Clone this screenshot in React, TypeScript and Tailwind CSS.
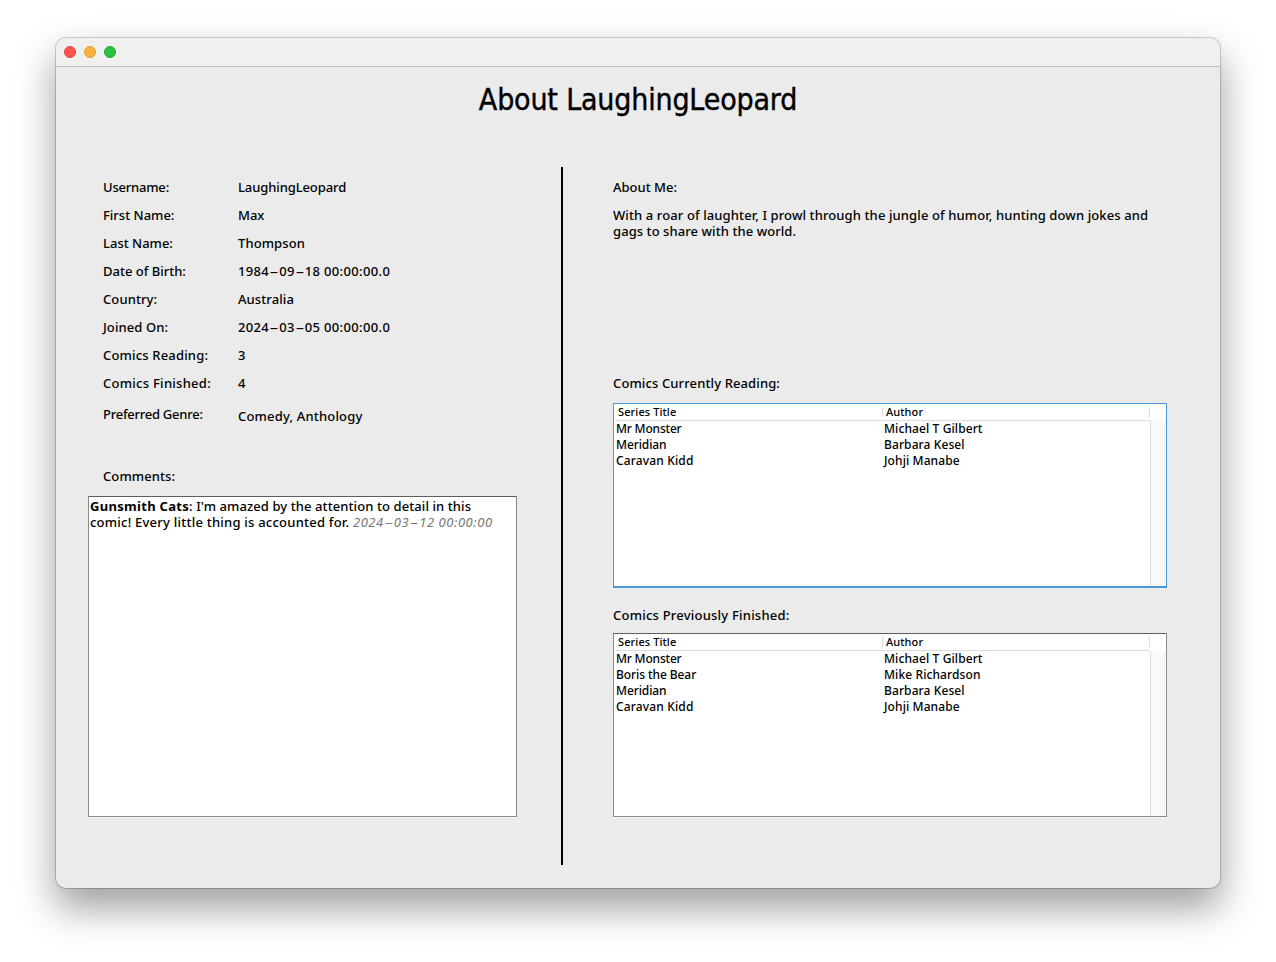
import React from "react";

const fields = [
  { label: "Username:", value: "LaughingLeopard", ls: "tracking-[-0.2px]", vs: "tracking-[-0.1px]" },
  { label: "First Name:", value: "Max", ls: "", vs: "" },
  { label: "Last Name:", value: "Thompson", ls: "", vs: "tracking-[0.1px]" },
  { label: "Date of Birth:", value: "1984-09-18 00:00:00.0", ls: "", vs: "tracking-[0.35px]" },
  { label: "Country:", value: "Australia", ls: "tracking-[0.1px]", vs: "tracking-[0.1px]" },
  { label: "Joined On:", value: "2024-03-05 00:00:00.0", ls: "tracking-[0.1px]", vs: "tracking-[0.35px]" },
  { label: "Comics Reading:", value: "3", ls: "tracking-[0.17px]", vs: "" },
  { label: "Comics Finished:", value: "4", ls: "tracking-[0.27px]", vs: "" },
];

type Row = { title: string; author: string; ts: string };

const reading: Row[] = [
  { title: "Mr Monster", author: "Michael T Gilbert", ts: "tracking-[-0.2px]" },
  { title: "Meridian", author: "Barbara Kesel", ts: "tracking-[-0.1px]" },
  { title: "Caravan Kidd", author: "Johji Manabe", ts: "tracking-[0.15px]" },
];

const finished: Row[] = [
  { title: "Mr Monster", author: "Michael T Gilbert", ts: "tracking-[-0.2px]" },
  { title: "Boris the Bear", author: "Mike Richardson", ts: "tracking-[-0.08px]" },
  { title: "Meridian", author: "Barbara Kesel", ts: "tracking-[-0.1px]" },
  { title: "Caravan Kidd", author: "Johji Manabe", ts: "tracking-[0.15px]" },
];

// Timestamps use wide hyphens between the date parts.
function Wide({ text }: { text: string }) {
  return (
    <>
      {text.split("-").map((part, i) => (
        <React.Fragment key={i}>
          {i > 0 && <span className="inline-block w-[10px] scale-x-[2.1] text-center tracking-normal">-</span>}
          {part}
        </React.Fragment>
      ))}
    </>
  );
}

function ComicTable({ rows, frame }: { rows: Row[]; frame: string }) {
  return (
    <div className={`flex w-[554px] shrink-0 flex-col bg-white ${frame}`}>
      <div className="flex h-[17px] shrink-0 text-[11px] leading-4 tracking-[0.1px]">
        <div className="ml-px flex w-[535px] border-b border-[#dcdcdc]">
          <div className="my-[3px] flex w-[268px] items-center border-r border-[#dcdcdc] pl-[3px]">Series Title</div>
          <div className="my-[3px] flex flex-1 items-center border-r border-[#dcdcdc] pl-[3px]">Author</div>
        </div>
      </div>
      <div className="flex min-h-0 flex-1">
        <div className="flex-1 text-[12px] leading-4">
          {rows.map((r) => (
            <div key={r.title} className="flex h-4">
              <div className={`w-[268px] pl-[2px] ${r.ts}`}>{r.title}</div>
              <div className="pl-[2px] tracking-[0.1px]">{r.author}</div>
            </div>
          ))}
        </div>
        <div className="mr-px w-[15px] border-x border-l-[#e0e0e0] border-r-[#ececec] bg-[#f9f9f9]" />
      </div>
    </div>
  );
}

export default function App() {
  return (
    <div className="h-[962px] w-[1276px] overflow-hidden bg-white pt-[38px] pl-[56px] font-['Noto_Sans',sans-serif] text-[13px] leading-4 font-medium text-black">
      <div className="flex h-[850px] w-[1164px] flex-col overflow-hidden rounded-[10px] bg-[#ebebeb] shadow-[0_0_0_1px_rgba(0,0,0,0.18),0_19px_38px_1px_rgba(0,0,0,0.38)]">
        <header className="flex h-[29px] shrink-0 items-center gap-2 border-b border-[#bdbdbb] bg-[#f0f0ee] pl-2">
          <span className="h-3 w-3 rounded-full border border-[#de4340] bg-[#fe5450]" />
          <span className="h-3 w-3 rounded-full border border-[#dd9a33] bg-[#feb33c]" />
          <span className="h-3 w-3 rounded-full border border-[#25a536] bg-[#2ac240]" />
        </header>
        <h1 className="h-[100px] shrink-0 pt-[13px] text-center font-['DejaVu_Sans_Condensed','DejaVu_Sans',sans-serif] text-[30px] leading-10 font-normal tracking-[-0.18px] [-webkit-text-stroke:0.4px_black]">
          About LaughingLeopard
        </h1>
        <div className="flex flex-1">
          <section className="w-[505px] pl-8">
            <div className="pt-[6px] pl-[15px]">
              {fields.map((f) => (
                <div key={f.label} className="flex h-7 items-center">
                  <div className={`w-[135px] ${f.ls}`}>{f.label}</div>
                  <div className={f.vs}>
                    <Wide text={f.value} />
                  </div>
                </div>
              ))}
              <div className="flex h-[71px] pt-[9px]">
                <div className="w-[135px] tracking-[-0.25px]">Preferred Genre:</div>
                <div className="pt-[2px] tracking-[0.18px]">Comedy, Anthology</div>
              </div>
              <div className="h-7 tracking-[0.1px]">Comments:</div>
            </div>
            <div className="h-[321px] w-[429px] border border-[#8a8a8a] border-t-[#5e5e5e] bg-white pt-px pl-px shadow-[0_1px_0_#f6f6f6]">
              <p className="whitespace-nowrap tracking-[0.09px]">
                <b className="tracking-[0.3px]">Gunsmith Cats</b>: I'm amazed by the attention to detail in this
              </p>
              <p className="whitespace-nowrap tracking-[0.23px]">
                comic! Every little thing is accounted for.{" "}
                <i className="font-normal tracking-[0.55px] text-[#777777]">
                  <Wide text="2024-03-12 00:00:00" />
                </i>
              </p>
            </div>
          </section>
          <div className="h-[698px] w-[2px] bg-black" />
          <section className="flex flex-1 flex-col pl-[50px]">
            <div className="pt-3">About Me:</div>
            <div className="h-[180px] pt-3">
              <p className="whitespace-nowrap tracking-[0.11px]">
                With a roar of laughter, I prowl through the jungle of humor, hunting down jokes and
              </p>
              <p className="tracking-[0.07px]">gags to share with the world.</p>
            </div>
            <div className="h-[28px] tracking-[0.12px]">Comics Currently Reading:</div>
            <ComicTable rows={reading} frame="h-[185px] border border-b-2 border-[#4a98dc]" />
            <div className="h-[45px] pt-[19px] tracking-[0.22px]">Comics Previously Finished:</div>
            <ComicTable rows={finished} frame="h-[184px] border border-[#8a8a8a] border-t-[#5e5e5e] shadow-[0_1px_0_#f6f6f6]" />
          </section>
        </div>
      </div>
    </div>
  );
}
